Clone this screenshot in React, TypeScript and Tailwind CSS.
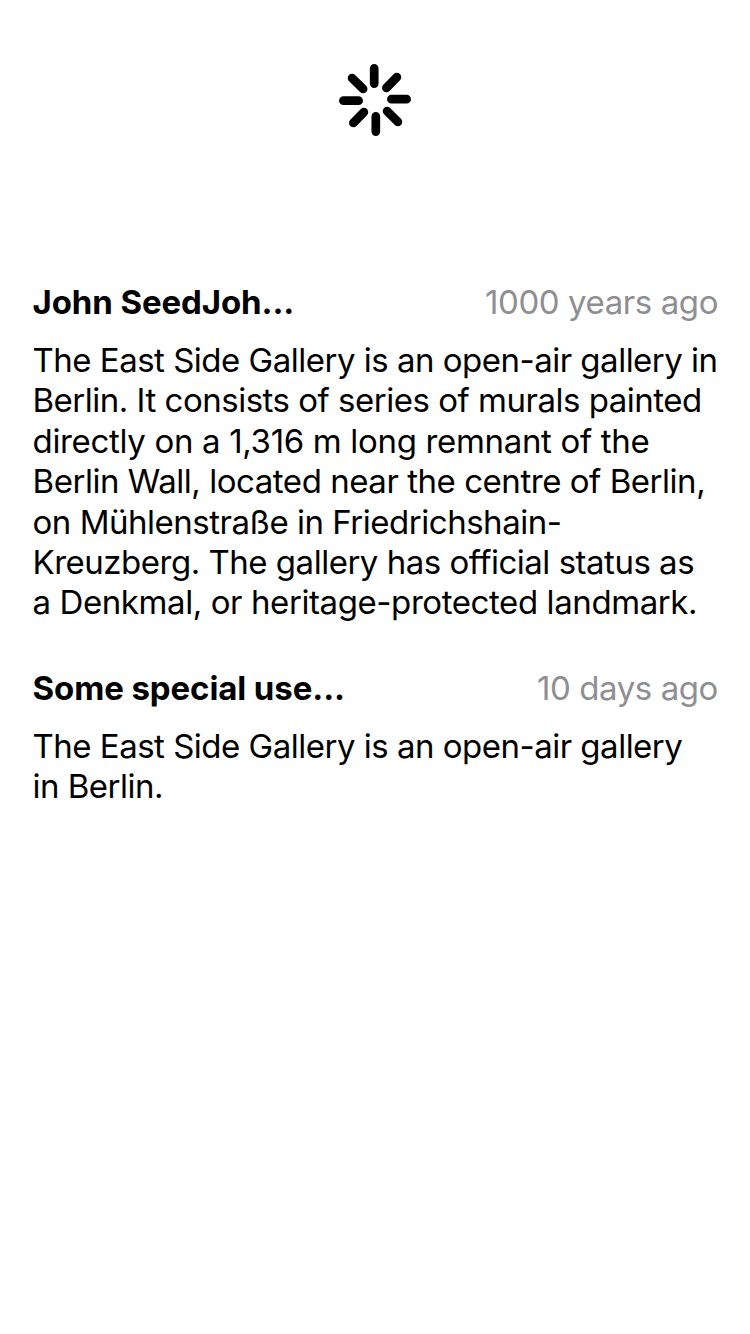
import React from "react";

type Entry = { name: string; time: string; lines: [string, string][] };

const entries: Entry[] = [
  {
    name: "John SeedJoh...",
    time: "1000 years ago",
    lines: [
      ["The East Side Gallery is an open-air gallery in", "tracking-[-0.5px]"],
      ["Berlin. It consists of series of murals painted", "tracking-[-0.49px]"],
      ["directly on a 1,316 m long remnant of the", "tracking-[-0.33px]"],
      ["Berlin Wall, located near the centre of Berlin,", "tracking-[-0.46px]"],
      ["on Mühlenstraße in Friedrichshain-", "tracking-[-0.48px]"],
      ["Kreuzberg. The gallery has official status as", "tracking-[-0.49px]"],
      ["a Denkmal, or heritage-protected landmark.", "tracking-[-0.41px]"],
    ],
  },
  {
    name: "Some special use...",
    time: "10 days ago",
    lines: [
      ["The East Side Gallery is an open-air gallery", "tracking-[-0.5px]"],
      ["in Berlin.", "tracking-[-0.5px]"],
    ],
  },
];

function Spinner() {
  return (
    <svg className="size-[72px]" viewBox="0 0 72 72" fill="none" stroke="black" strokeWidth="8.7" strokeLinecap="round">
      <path d="M35.2 4.4V19.6M57.9 13.1L47.4 23.9M67.6 35.2H52.4M58.9 57.9L48.1 47.1M36.8 67.6V52.4M14.4 58.9L24.9 48.1M4.4 36.7H19.6M13.1 14.1L24.1 24.9" />
    </svg>
  );
}

export default function App() {
  return (
    <main className="flex min-h-screen w-full flex-col bg-white font-['Inter',sans-serif] text-black">
      <div className="flex justify-center pt-16">
        <Spinner />
      </div>
      <div className="flex flex-col gap-[45px] pr-[32px] pl-[32.5px] pt-[146px]">
        {entries.map((e) => (
          <article key={e.name}>
            <header className="flex items-center justify-between text-[33px] leading-[40px]">
              <h2 className="font-bold tracking-[-0.1px]">{e.name}</h2>
              <time className="tracking-[-0.42px] text-[#8e8e93]">{e.time}</time>
            </header>
            <div className="pt-[18px] text-[33px] leading-[40.4px]">
              {e.lines.map(([text, tracking]) => (
                <p key={text} className={`whitespace-nowrap ${tracking}`}>{text}</p>
              ))}
            </div>
          </article>
        ))}
      </div>
    </main>
  );
}
